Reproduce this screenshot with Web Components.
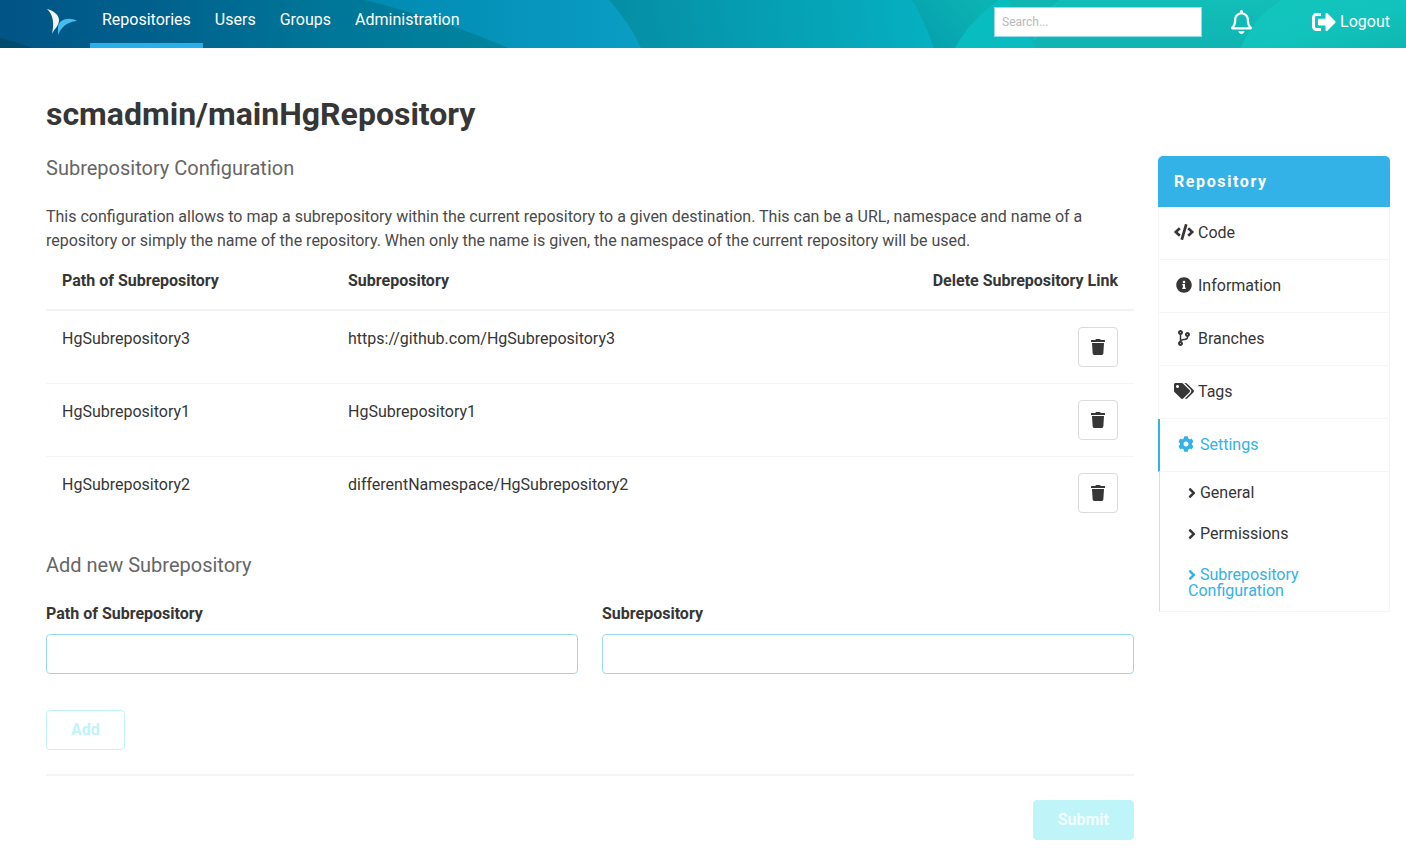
<!DOCTYPE html>
<html lang="en">
<head>
<meta charset="utf-8">
<meta name="viewport" content="width=device-width, initial-scale=1">
<title>scmadmin/mainHgRepository</title>
<style>
  body { margin: 0; background: #fff; color: #363636; font: 16px/24px Roboto, "Liberation Sans", sans-serif; }
</style>
</head>
<body>
<scm-page></scm-page>

<template id="t-navbar">
  <style>
    :host { display: block; position: relative; height: 48px; color: #fff; overflow: hidden; }
    .art { position: absolute; inset: 0; width: 100%; height: 100%; }
    nav { position: relative; display: flex; height: 100%; padding: 0 16px 0 46px; }
    .logo { width: 32px; height: 28px; margin: 8px 12px 0 0; }
    .tabs { display: flex; flex: 1; }
    .right { display: flex; align-items: center; height: 44px; }
    input { box-sizing: border-box; width: 208px; height: 30px; padding: 0 7px; border: 1px solid #98d8f3; border-radius: 0; background: #fff; color: #363636; font: 12px Roboto, sans-serif; }
    input::placeholder { color: #b9b9b9; opacity: 1; }
    .bell { display: flex; margin: 0 60px 0 29px; padding: 0; border: 0; background: none; color: #fff; }
    .logout { display: flex; align-items: center; gap: 4px; color: #fff; text-decoration: none; }
  </style>
  <svg class="art" viewBox="0 0 1406 48" preserveAspectRatio="none" aria-hidden="true">
    <defs>
      <linearGradient id="a" gradientUnits="userSpaceOnUse" x1="0" y1="0" x2="510" y2="0"><stop offset="0" stop-color="#005486"/><stop offset=".3" stop-color="#00618d"/><stop offset=".6" stop-color="#007497"/><stop offset="1" stop-color="#00869f"/></linearGradient>
      <linearGradient id="b" gradientUnits="userSpaceOnUse" x1="365" y1="0" x2="641" y2="0"><stop offset="0" stop-color="#008ab2"/><stop offset="1" stop-color="#0b9dc3"/></linearGradient>
      <linearGradient id="c" gradientUnits="userSpaceOnUse" x1="615" y1="40" x2="925" y2="0"><stop offset="0" stop-color="#058ea6"/><stop offset="1" stop-color="#05b0c0"/></linearGradient>
      <linearGradient id="d" gradientUnits="userSpaceOnUse" x1="930" y1="48" x2="980" y2="0"><stop offset="0" stop-color="#06a1ae"/><stop offset="1" stop-color="#0cb3b3"/></linearGradient>
      <linearGradient id="e" x1="0" y1="0" x2="0" y2="1"><stop offset="0" stop-color="#12beb8"/><stop offset="1" stop-color="#10b4b2"/></linearGradient>
      <linearGradient id="f" x1="0" y1="0" x2="1" y2="1"><stop offset="0" stop-color="#12c5bd"/><stop offset=".55" stop-color="#11c3bc"/><stop offset="1" stop-color="#10b5b1"/></linearGradient>
    </defs>
    <path fill="url(#a)" d="M0 0H520V48H0z"/>
    <path fill="#004a6e" d="M0 38Q16 42 32 48H0z"/>
    <path fill="url(#b)" d="M365 0Q450 22 508 48H650V0z"/>
    <path fill="url(#c)" d="M609 0Q629 22 641 48H940V0z"/>
    <path fill="url(#d)" d="M912 0Q925 22 934 48H1020V0z"/>
    <path fill="#09bcbf" d="M955 48Q970 20 999 0H1100V48z"/>
    <path fill="url(#e)" d="M1008 0Q1018 20 1036 48H1300V0z"/>
    <path fill="#10c3bd" d="M1036 40Q1044 14 1062 0H1008Q1018 24 1036 40z"/>
    <path fill="#10b6b1" d="M1008 0H1060L1042 14H1015z"/>
    <path fill="url(#f)" d="M1241 48Q1252 18 1282 0H1406V48z"/>
  </svg>
  <nav aria-label="Main">
    <svg class="logo" viewBox="0 0 32 28" aria-hidden="true">
      <path fill="#f4f4f4" d="M1 1C8 3 13 7 13 12C13 18 8 21 6 26C8 17 8 7 1 1z"/>
      <path fill="#44bcec" d="M31 13C25 9 12 10 12 20L12 27C15 20 20 14 31 13z"/>
    </svg>
    <div class="tabs">
      <scm-tab active>Repositories</scm-tab><scm-tab>Users</scm-tab><scm-tab>Groups</scm-tab><scm-tab>Administration</scm-tab>
    </div>
    <div class="right">
      <input type="search" placeholder="Search..." aria-label="Search">
      <button class="bell" type="button" aria-label="Notifications"><scm-icon name="bell" size="24"></scm-icon></button>
      <a class="logout" href="#logout"><scm-icon name="logout" size="24"></scm-icon><span>Logout</span></a>
    </div>
  </nav>
</template>

<template id="t-tab">
  <style>
    :host { display: block; }
    a { box-sizing: border-box; display: block; height: 48px; padding: 8px 12px 0; color: #fff; text-decoration: none; border-bottom: 5px solid transparent; }
    :host([active]) a { border-color: #28b1e8; }
  </style>
  <a href="#"><slot></slot></a>
</template>

<template id="t-menu">
  <style>
    :host { display: block; border-bottom: 1px solid #f5f5f5; }
    h2 { margin: 0; padding: 14px 16px 13px; border-radius: 5px 5px 0 0; background: #33b2e8; color: #fff; font-size: 16px; line-height: 24px; font-weight: 700; letter-spacing: 0.1em; }
  </style>
  <h2>Repository</h2>
  <slot></slot>
</template>

<template id="t-menu-item">
  <style>
    :host { display: block; border: 1px solid #f5f5f5; border-width: 0 1px 1px; }
    a { display: flex; align-items: center; gap: 4px; height: 52px; padding: 0 15px; color: inherit; text-decoration: none; }
    span { display: flex; justify-content: center; width: 20px; padding-bottom: 2px; }
    :host([active]) { border-left: 2px solid #33b2e8; color: #33b2e8; }
    :host([active]) a { padding: 0 16px; }
  </style>
  <a href="#"><span><scm-icon size="16"></scm-icon></span><div><slot></slot></div></a>
</template>

<template id="t-submenu">
  <style>
    :host { display: block; margin-left: 1px; border-left: 1px solid #dbdbdb; border-right: 1px solid #f5f5f5; }
    a { display: block; padding: 13px 72px 12px 28px; color: inherit; line-height: 16px; text-decoration: none; }
    a[aria-current] { color: #33b2e8; }
    scm-icon { display: inline-block; vertical-align: top; }
  </style>
  <a href="#general"><scm-icon name="angle" size="16"></scm-icon> General</a>
  <a href="#permissions"><scm-icon name="angle" size="16"></scm-icon> Permissions</a>
  <a href="#subrepositories" aria-current="page"><scm-icon name="angle" size="16"></scm-icon> Subrepository Configuration</a>
</template>

<template id="t-table">
  <style>
    :host { display: block; }
    table { width: 100%; border-collapse: separate; border-spacing: 0; table-layout: fixed; }
    th, td { padding: 16px; text-align: left; vertical-align: top; border-bottom: 1px solid #f5f5f5; }
    th { border-bottom: 2px solid #f2f2f2; font-weight: 700; }
    tbody tr:last-child td { border-bottom: 0; }
    .key { width: 254px; }
    .action { width: 192px; text-align: right; }
    td.action { line-height: 0; }
    button { box-sizing: border-box; display: inline-flex; align-items: center; justify-content: center; width: 40px; height: 40px; padding: 0; border: 1px solid #dbdbdb; border-radius: 4px; background: #fff; color: #363636; }
  </style>
  <table>
    <thead><tr><th class="key" scope="col">Path of Subrepository</th><th scope="col">Subrepository</th><th class="action" scope="col">Delete Subrepository Link</th></tr></thead>
    <tbody></tbody>
  </table>
</template>

<template id="t-field">
  <style>
    :host { display: block; }
    label { display: block; margin-bottom: 8px; font-weight: 700; }
    input { box-sizing: border-box; display: block; width: 100%; height: 40px; padding: 0 12px; border: 1px solid #99d8f3; border-radius: 4px; background: #fff; color: #363636; font: inherit; }
  </style>
  <label for="value"><slot></slot></label>
  <input id="value" type="text">
</template>

<template id="t-button">
  <style>
    :host { display: block; }
    button { box-sizing: border-box; display: block; height: 40px; padding: 0 24px 1px; border: 1px solid #bff4f8; border-radius: 4px; background: #fff; color: #bff4f8; font: 700 16px/24px Roboto, "Liberation Sans", sans-serif; }
    :host([primary]) button { background: #bff4f8; color: #f1fdfe; }
  </style>
  <button type="button" disabled><slot></slot></button>
</template>

<template id="t-page">
  <style>
    :host { display: block; }
    main { padding: 48px 16px 20px 46px; }
    h1 { margin: 0 0 24px; font-size: 32px; line-height: 36px; font-weight: 700; }
    .columns { display: grid; grid-template-columns: minmax(0, 1fr) 232px; gap: 24px; align-items: start; }
    h2 { margin: 0 0 25px; color: #666; font-size: 20px; line-height: 24px; font-weight: 400; }
    p { margin: 0; color: #4a4a4a; }
    scm-subrepo-table { margin-bottom: 24px; }
    .fields { display: grid; grid-template-columns: 1fr 1fr; gap: 24px; margin-bottom: 36px; }
    .actions { display: flex; }
    .end { justify-content: flex-end; }
    hr { height: 2px; margin: 24px 0; border: 0; background: #f4f4f4; }
  </style>
  <scm-navbar></scm-navbar>
  <main>
    <h1>scmadmin/mainHgRepository</h1>
    <div class="columns">
      <section>
        <h2>Subrepository Configuration</h2>
        <p>This configuration allows to map a subrepository within the current repository to a given destination. This can be a URL, namespace and name of a repository or simply the name of the repository. When only the name is given, the namespace of the current repository will be used.</p>
        <scm-subrepo-table></scm-subrepo-table>
        <h2>Add new Subrepository</h2>
        <div class="fields">
          <scm-field>Path of Subrepository</scm-field>
          <scm-field>Subrepository</scm-field>
        </div>
        <div class="actions"><scm-button>Add</scm-button></div>
        <hr>
        <div class="actions end"><scm-button primary>Submit</scm-button></div>
      </section>
      <scm-menu>
        <scm-menu-item icon="code">Code</scm-menu-item>
        <scm-menu-item icon="info">Information</scm-menu-item>
        <scm-menu-item icon="branch">Branches</scm-menu-item>
        <scm-menu-item icon="tags">Tags</scm-menu-item>
        <scm-menu-item icon="cog" active>Settings</scm-menu-item>
        <scm-submenu></scm-submenu>
      </scm-menu>
    </div>
  </main>
</template>

<script>
const ICONS = {
  code: [640, 'M278.9 511.5l-61-17.7c-6.4-1.8-10-8.5-8.2-14.9L346.2 8.7c1.8-6.4 8.5-10 14.9-8.2l61 17.7c6.4 1.8 10 8.5 8.2 14.9L293.8 503.3c-1.9 6.4-8.5 10.1-14.9 8.2zm-114-112.2l43.5-46.4c4.6-4.9 4.3-12.7-.8-17.2L117 256l90.6-79.7c5.1-4.5 5.5-12.3.8-17.2l-43.5-46.4c-4.5-4.8-12.1-5.1-17-.5L3.8 247.2c-5.1 4.7-5.1 12.8 0 17.5l144.1 135.1c4.9 4.6 12.5 4.4 17-.5zm327.2.6l144.1-135.1c5.1-4.7 5.1-12.8 0-17.5L492.1 112.1c-4.8-4.5-12.4-4.3-17 .5L431.6 159c-4.6 4.9-4.3 12.7.8 17.2L523 256l-90.6 79.7c-5.1 4.5-5.5 12.3-.8 17.2l43.5 46.4c4.5 4.9 12.1 5.1 17 .6z'],
  info: [512, 'M256 8C119.043 8 8 119.083 8 256c0 136.997 111.043 248 248 248s248-111.003 248-248C504 119.083 392.957 8 256 8zm0 110c23.196 0 42 18.804 42 42s-18.804 42-42 42-42-18.804-42-42 18.804-42 42-42zm56 254c0 6.627-5.373 12-12 12h-88c-6.627 0-12-5.373-12-12v-24c0-6.627 5.373-12 12-12h12v-64h-12c-6.627 0-12-5.373-12-12v-24c0-6.627 5.373-12 12-12h64c6.627 0 12 5.373 12 12v100h12c6.627 0 12 5.373 12 12v24z'],
  branch: [384, 'M384 144c0-44.2-35.8-80-80-80s-80 35.8-80 80c0 36.4 24.3 67.1 57.5 76.8-.6 16.1-4.2 28.5-11 36.9-15.4 19.2-49.3 22.4-85.2 25.7-28.2 2.6-57.4 5.4-81.3 16.9v-144c32.5-10.2 56-40.5 56-76.3 0-44.2-35.8-80-80-80S0 35.8 0 80c0 35.8 23.5 66.1 56 76.3v199.3C23.5 365.9 0 396.2 0 432c0 44.2 35.8 80 80 80s80-35.8 80-80c0-34-21.2-63.1-51.2-74.6 3.1-5.2 7.8-9.8 14.9-13.4 16.2-8.2 40.4-10.4 66.1-12.8 42.2-3.9 90-8.4 118.2-43.4 14-17.4 21.1-39.8 21.6-67.9 31.6-10.8 54.4-40.7 54.4-75.9zM80 64c8.8 0 16 7.2 16 16s-7.2 16-16 16-16-7.2-16-16 7.2-16 16-16zm0 384c-8.8 0-16-7.2-16-16s7.2-16 16-16 16 7.2 16 16-7.2 16-16 16zm224-320c8.8 0 16 7.2 16 16s-7.2 16-16 16-16-7.2-16-16 7.2-16 16-16z'],
  tags: [640, 'M497.941 225.941L286.059 14.059A48 48 0 0 0 252.118 0H48C21.49 0 0 21.49 0 48v204.118a48 48 0 0 0 14.059 33.941l211.882 211.882c18.744 18.745 49.136 18.746 67.882 0l204.118-204.118c18.745-18.745 18.745-49.137 0-67.882zM112 160c-26.51 0-48-21.49-48-48s21.49-48 48-48 48 21.49 48 48-21.49 48-48 48zm513.941 133.823L421.823 497.941c-18.745 18.745-49.137 18.745-67.882 0l-.36-.36L527.64 323.522c16.999-16.999 26.36-39.6 26.36-63.64s-9.362-46.641-26.36-63.64L331.397 0h48.721a48 48 0 0 1 33.941 14.059l211.882 211.882c18.745 18.745 18.745 49.137 0 67.882z'],
  cog: [512, 'M487.4 315.7l-42.6-24.6c4.3-23.2 4.3-47 0-70.2l42.6-24.6c4.9-2.8 7.1-8.6 5.5-14-11.1-35.6-30-67.8-54.7-94.6-3.8-4.1-10-5.1-14.8-2.3L380.8 110c-17.9-15.4-38.5-27.3-60.8-35.1V25.8c0-5.6-3.9-10.5-9.4-11.7-36.7-8.2-74.3-7.8-109.2 0-5.5 1.2-9.4 6.1-9.4 11.7V75c-22.2 7.9-42.8 19.8-60.8 35.1L88.7 85.5c-4.9-2.8-11-1.9-14.8 2.3-24.7 26.7-43.6 58.9-54.7 94.6-1.7 5.4.6 11.2 5.5 14L67.3 221c-4.3 23.2-4.3 47 0 70.2l-42.6 24.6c-4.9 2.8-7.1 8.6-5.5 14 11.1 35.6 30 67.8 54.7 94.6 3.8 4.1 10 5.1 14.8 2.3l42.6-24.6c17.9 15.4 38.5 27.3 60.8 35.1v49.2c0 5.6 3.9 10.5 9.4 11.7 36.7 8.2 74.3 7.8 109.2 0 5.5-1.2 9.4-6.1 9.4-11.7v-49.2c22.2-7.9 42.8-19.8 60.8-35.1l42.6 24.6c4.9 2.8 11 1.9 14.8-2.3 24.7-26.7 43.6-58.9 54.7-94.6 1.5-5.5-.7-11.3-5.6-14.1zM256 336c-44.1 0-80-35.9-80-80s35.9-80 80-80 80 35.9 80 80-35.9 80-80 80z'],
  angle: [256, 'M224.3 273l-136 136c-9.4 9.4-24.6 9.4-33.9 0l-22.6-22.6c-9.4-9.4-9.4-24.6 0-33.9l96.4-96.4-96.4-96.4c-9.4-9.4-9.4-24.6 0-33.9L54.3 103c9.4-9.4 24.6-9.4 33.9 0l136 136c9.5 9.4 9.5 24.6.1 34z'],
  trash: [448, 'M432 32H312l-9.4-18.7A24 24 0 0 0 281.1 0H166.8a23.72 23.72 0 0 0-21.4 13.3L136 32H16A16 16 0 0 0 0 48v32a16 16 0 0 0 16 16h416a16 16 0 0 0 16-16V48a16 16 0 0 0-16-16zM53.2 467a48 48 0 0 0 47.9 45h245.8a48 48 0 0 0 47.9-45L416 128H32z'],
  bell: [448, 'M439.39 362.29c-19.32-20.76-55.47-51.99-55.47-154.29 0-77.7-54.48-139.9-127.94-155.16V32c0-17.67-14.32-32-31.98-32s-31.98 14.33-31.98 32v20.84C118.56 68.1 64.08 130.3 64.08 208c0 102.3-36.15 133.53-55.47 154.29-6 6.45-8.66 14.16-8.61 21.71.11 16.4 12.98 32 32.1 32h383.8c19.12 0 32-15.6 32.1-32 .05-7.55-2.61-15.27-8.61-21.71zM67.53 368c21.22-27.97 44.42-74.33 44.53-159.42 0-.2-.06-.38-.06-.58 0-61.86 50.14-112 112-112s112 50.14 112 112c0 .2-.06.38-.06.58.11 85.1 23.31 131.46 44.53 159.42H67.53zM224 512c35.32 0 63.97-28.65 63.97-64H160.03c0 35.35 28.65 64 63.97 64z'],
  logout: [512, 'M497 273L329 441c-15 15-41 4.5-41-17v-96H152c-13.3 0-24-10.7-24-24v-96c0-13.3 10.7-24 24-24h136V88c0-21.4 25.9-32 41-17l168 168c9.3 9.4 9.3 24.6 0 34zM192 436v-40c0-6.6-5.4-12-12-12H96c-17.7 0-32-14.3-32-32V160c0-17.7 14.3-32 32-32h84c6.6 0 12-5.4 12-12V76c0-6.6-5.4-12-12-12H96c-53 0-96 43-96 96v192c0 53 43 96 96 96h84c6.6 0 12-5.4 12-12z']
};

class ScmElement extends HTMLElement {
  constructor() {
    super();
    this.attachShadow({ mode: 'open' });
    const id = this.constructor.template;
    if (id) this.shadowRoot.append(document.getElementById(id).content.cloneNode(true));
  }
}

class ScmIcon extends ScmElement {
  static observedAttributes = ['name', 'size'];
  connectedCallback() { this.render(); }
  attributeChangedCallback() { this.render(); }
  render() {
    const icon = ICONS[this.getAttribute('name')];
    if (!icon) return;
    const size = Number(this.getAttribute('size') || 16);
    this.shadowRoot.innerHTML = `<style>:host{display:block;flex:none}svg{display:block;fill:currentColor}</style>
      <svg width="${Math.round(size * icon[0] / 512)}" height="${size}" viewBox="0 0 ${icon[0]} 512" aria-hidden="true"><path d="${icon[1]}"/></svg>`;
  }
}

class ScmMenuItem extends ScmElement {
  static template = 't-menu-item';
  connectedCallback() {
    this.shadowRoot.querySelector('scm-icon').setAttribute('name', this.getAttribute('icon'));
  }
}

class ScmSubrepoTable extends ScmElement {
  static template = 't-table';
  connectedCallback() {
    const rows = [
      ['HgSubrepository3', 'https://github.com/HgSubrepository3'],
      ['HgSubrepository1', 'HgSubrepository1'],
      ['HgSubrepository2', 'differentNamespace/HgSubrepository2']
    ];
    this.shadowRoot.querySelector('tbody').innerHTML = rows.map(([path, target]) =>
      `<tr><td>${path}</td><td>${target}</td><td class="action"><button type="button" aria-label="Delete ${path}"><scm-icon name="trash" size="16"></scm-icon></button></td></tr>`).join('');
  }
}

customElements.define('scm-icon', ScmIcon);
customElements.define('scm-tab', class extends ScmElement { static template = 't-tab'; });
customElements.define('scm-navbar', class extends ScmElement { static template = 't-navbar'; });
customElements.define('scm-menu-item', ScmMenuItem);
customElements.define('scm-submenu', class extends ScmElement { static template = 't-submenu'; });
customElements.define('scm-menu', class extends ScmElement { static template = 't-menu'; });
customElements.define('scm-subrepo-table', ScmSubrepoTable);
customElements.define('scm-field', class extends ScmElement { static template = 't-field'; });
customElements.define('scm-button', class extends ScmElement { static template = 't-button'; });
customElements.define('scm-page', class extends ScmElement { static template = 't-page'; });
</script>
</body>
</html>
